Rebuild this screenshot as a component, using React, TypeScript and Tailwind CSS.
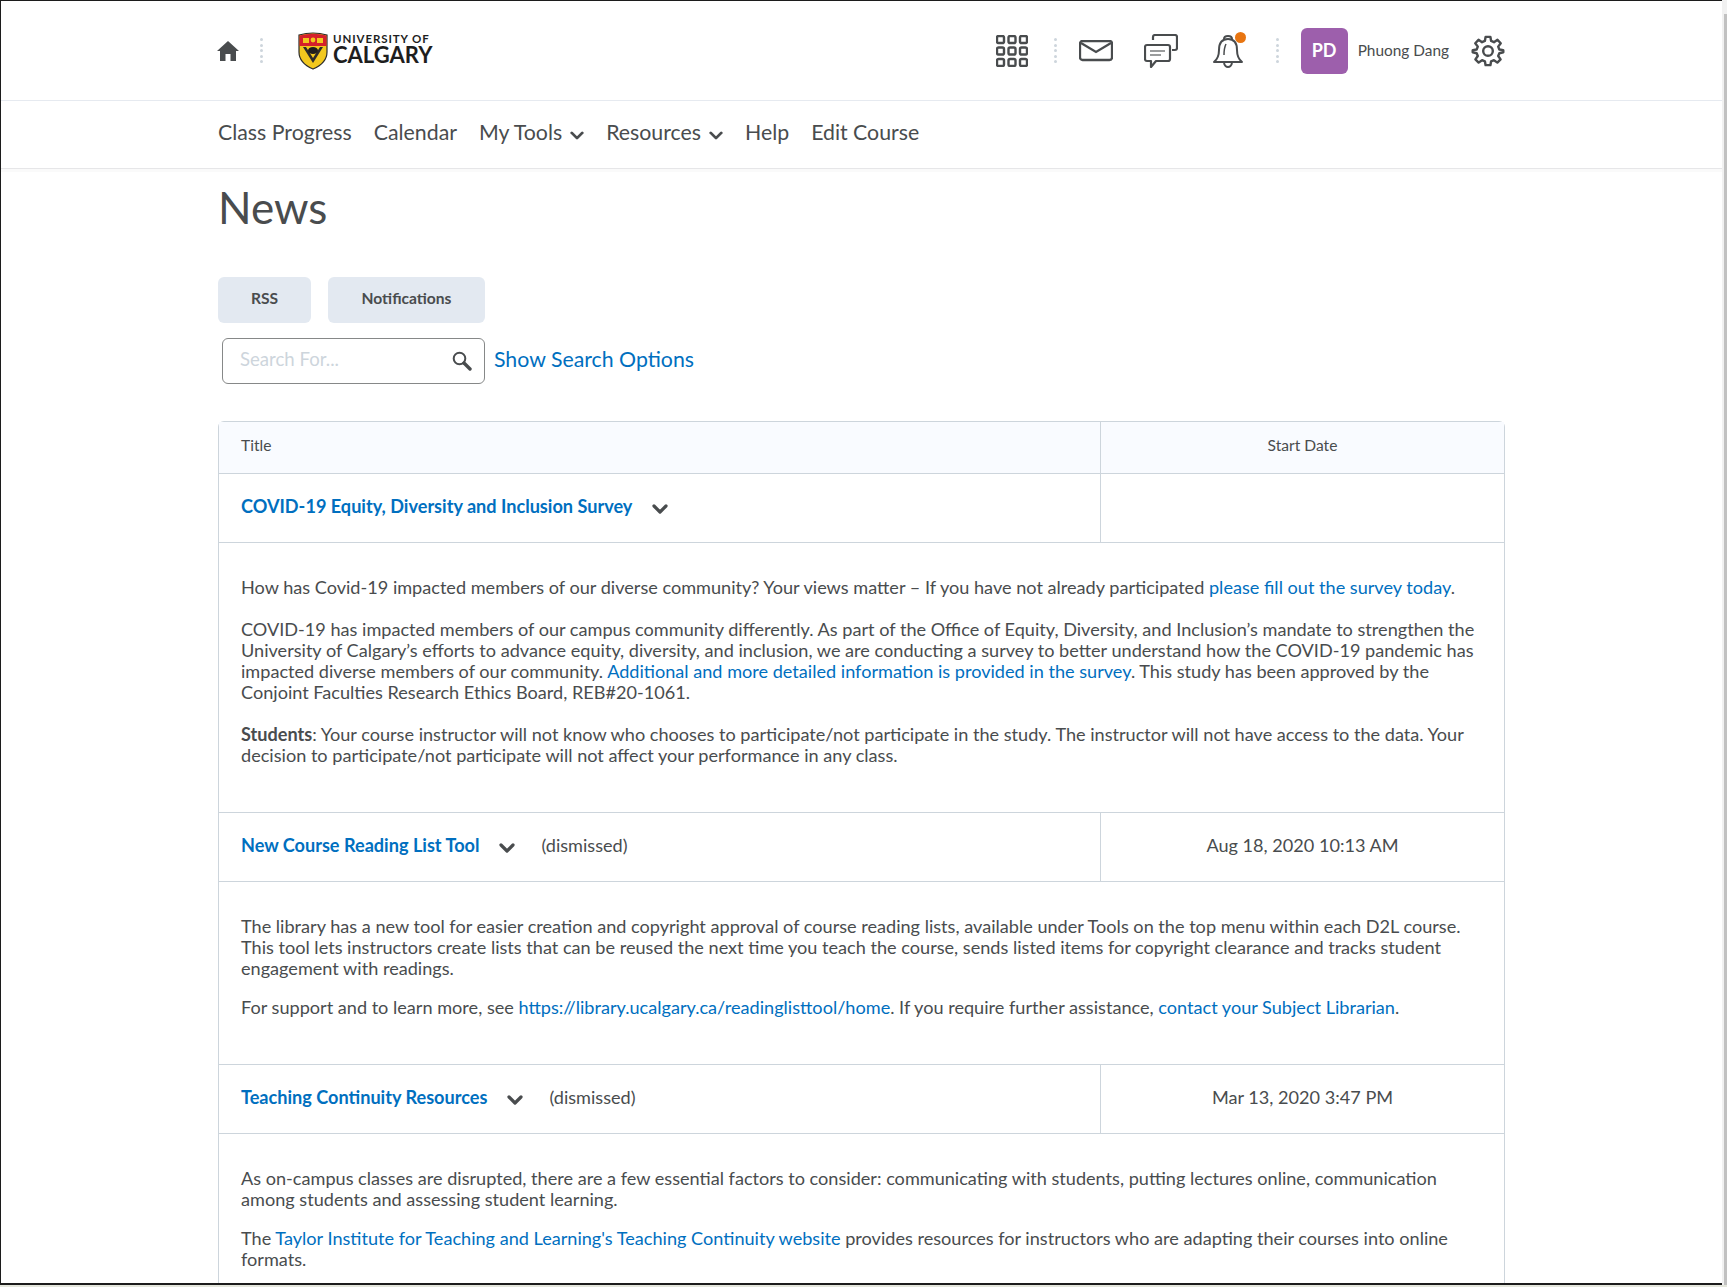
import { ReactNode } from "react";

const LATO = "[font-family:Lato,'Liberation_Sans',sans-serif]";

function Dots() {
  return (
    <div className="flex flex-col gap-[2.5px]">
      {[0, 1, 2, 3, 4].map((i) => (
        <span key={i} className="block h-[3px] w-[3px] rounded-full bg-[#cdd5dc]" />
      ))}
    </div>
  );
}

function Chevron({ className }: { className?: string }) {
  return (
    <svg width="16" height="10" viewBox="0 0 16 10" className={className}>
      <path d="M2 2 L8 8 L14 2" fill="none" stroke="#494c4e" strokeWidth="3.2" strokeLinecap="round" strokeLinejoin="round" />
    </svg>
  );
}

function Shield() {
  return (
    <svg width="30" height="38" viewBox="0 0 30 38">
      <path d="M1 3 Q15 -1 29 3 V20 Q29 31 15 37 Q1 31 1 20 Z" fill="#f2c81e" stroke="#2b2b2b" strokeWidth="1.2" />
      <path d="M1.5 3.5 Q15 0 28.5 3.5 V14 H1.5 Z" fill="#d5202a" />
      <rect x="5" y="6" width="6" height="5" fill="#f2c81e" />
      <rect x="19" y="6" width="6" height="5" fill="#f2c81e" />
      <circle cx="15" cy="8" r="2.4" fill="#f2c81e" />
      <path d="M5 15 L15 31 L25 15 L22 15 L15 26 L8 15 Z" fill="#2b2b2b" />
      <ellipse cx="15" cy="18.5" rx="5" ry="3.6" fill="#1e1e1e" />
    </svg>
  );
}

function A({ children }: { children: ReactNode }) {
  return <a className="text-[#006fbf]">{children}</a>;
}

function NewsHead({ title, dismissed, date }: { title: string; dismissed?: boolean; date?: string }) {
  return (
    <div className="flex h-[69px] shrink-0 border-b border-[#cdd5dc]">
      <div className="flex w-[882px] items-center border-r border-[#cdd5dc] pb-[3px] pl-[22px]">
        <span className="font-bold text-[#006fbf]">{title}</span>
        <Chevron className="ml-[20px] mt-[5px]" />
        {dismissed && <span className="ml-[26px]">(dismissed)</span>}
      </div>
      <div className="flex flex-1 items-center justify-center pb-[3px]">{date}</div>
    </div>
  );
}

const navItems = [
  { label: "Class Progress" },
  { label: "Calendar" },
  { label: "My Tools", menu: true },
  { label: "Resources", menu: true },
  { label: "Help" },
  { label: "Edit Course" },
];

export default function App() {
  return (
    <div className={`flex h-[1287px] flex-col overflow-hidden bg-white text-[18.12px] leading-[21px] text-[#494c4e] ${LATO}`}>
      <div className="flex min-h-0 flex-1">
        <div className="flex min-w-0 flex-1 flex-col overflow-hidden border-t-[1px] border-l-[1px] border-b-[2px] border-[#1c1c1c]">
          {/* top bar */}
          <div className="flex h-[100px] shrink-0 items-center border-b border-[#e6eaf0] pl-[216px] pr-[217px]">
            <svg width="22" height="20" viewBox="0 0 22 20" className="mt-[1px]">
              <path d="M11 0 L22 10 H19 V20 H13.5 V13 H8.5 V20 H3 V10 H0 Z" fill="#494c4e" />
            </svg>
            <div className="ml-[21px]"><Dots /></div>
            <div className="ml-[35px] flex items-center gap-[5px]">
              <Shield />
              <div className="flex flex-col pb-[3px] text-[#1e1e1e]">
                <span className="text-[11.5px] font-bold leading-[12px] tracking-[0.9px]">UNIVERSITY OF</span>
                <span className="text-[22px] font-bold leading-[20px]">CALGARY</span>
              </div>
            </div>
            <div className="ml-auto flex items-center">
              <svg width="32" height="32" viewBox="0 0 32 32" fill="none" stroke="#494c4e" strokeWidth="2.4">
                {[0, 11.5, 23].map((y) =>
                  [0, 11.5, 23].map((x) => <rect key={`${x}-${y}`} x={x + 1} y={y + 1} width="7" height="7" rx="1.6" />)
                )}
              </svg>
              <div className="ml-[26px]"><Dots /></div>
              <svg width="34" height="22" viewBox="0 0 34 22" className="ml-[22px]" fill="none" stroke="#494c4e" strokeWidth="2.3">
                <rect x="1" y="1" width="32" height="19" rx="2.5" />
                <path d="M2 3 L17 12 L32 3" />
              </svg>
              <svg width="34" height="34" viewBox="0 0 34 34" className="ml-[31px]" fill="none" stroke="#494c4e" strokeWidth="2.2" strokeLinejoin="round">
                <path d="M9 6 V3 Q9 1 11 1 H31 Q33 1 33 3 V14 Q33 16 31 16 H28" />
                <path d="M3 11 H24 Q26 11 26 13 V25 Q26 27 24 27 H12 L7 33 V27 H3 Q1 27 1 25 V13 Q1 11 3 11 Z" fill="white" />
                <path d="M6 17 H21 M6 21 H17" strokeWidth="1.5" stroke="#7a7c7e" />
              </svg>
              <div className="relative ml-[35px] h-[36px] w-[30px]">
                <svg width="30" height="36" viewBox="0 0 30 36" fill="none" stroke="#494c4e" strokeWidth="2" strokeLinejoin="round">
                  <path d="M11 6 Q11 3 15 3 Q19 3 19 6" />
                  <path d="M1 29 Q6 25 6 17 Q6 6 15 6 Q24 6 24 17 Q24 25 29 29 Z" />
                  <path d="M11 30 Q12 34 15 34 Q18 34 19 30" />
                  <path d="M11 22 Q11 15 13 11" strokeWidth="1.5" />
                </svg>
                <span className="absolute -right-[3px] -top-[1px] h-[11px] w-[11px] rounded-full bg-[#e87511]" />
              </div>
              <div className="ml-[33px]"><Dots /></div>
              <div className="ml-[22px] flex h-[46px] w-[47px] items-center justify-center rounded-[6px] bg-[#9d5fac] pb-[1px] text-[18px] font-bold text-white">PD</div>
              <span className="ml-[10px] pb-[1px] text-[15.4px]">Phuong Dang</span>
              <svg width="34" height="34" viewBox="0 0 24 24" className="ml-[22px]" fill="none" stroke="#494c4e" strokeWidth="1.7" strokeLinejoin="round">
                <circle cx="12" cy="12" r="3.4" />
                <path d="M10.3 2 H13.7 L14.2 4.9 L16.2 5.8 L18.7 4.1 L21 6.5 L19.2 8.9 L20 10.9 L22.8 11.4 V12.9 L20 13.6 L19.2 15.5 L20.9 17.9 L18.6 20.2 L16.2 18.5 L14.2 19.3 L13.7 22 H10.3 L9.8 19.3 L7.8 18.5 L5.4 20.2 L3.1 17.9 L4.8 15.5 L4 13.6 L1.2 12.9 V11.4 L4 10.9 L4.8 8.9 L3 6.5 L5.3 4.1 L7.8 5.8 L9.8 4.9 Z" />
              </svg>
            </div>
          </div>

          {/* nav */}
          <div className="flex h-[68px] shrink-0 items-center gap-[22px] border-b border-[#e6e6e8] pb-[5px] pl-[217px] text-[21.3px] shadow-[0_3px_0_#fafafa]">
            {navItems.map((n) => (
              <span key={n.label} className="flex items-center gap-[8px]">
                {n.label}
                {n.menu && <Chevron className="mt-[6px] h-[9px] w-[14px]" />}
              </span>
            ))}
          </div>

          {/* page */}
          <div className="flex min-h-0 flex-1 flex-col px-[217px]">
            <h1 className="mt-[13px] text-[44px] font-normal leading-[50px]">News</h1>
            <div className="mt-[45px] flex gap-[17px] text-[15.6px] font-bold">
              <button className="h-[46px] w-[93px] rounded-[6px] bg-[#e3e9f1] pb-[3px]">RSS</button>
              <button className="h-[46px] w-[157px] rounded-[6px] bg-[#e3e9f1] pb-[3px]">Notifications</button>
            </div>
            <div className="mt-[15px] flex items-center">
              <div className="ml-[4px] flex h-[46px] w-[263px] items-center justify-between rounded-[6px] border border-[#868888] pl-[17px] pr-[12px] text-[18.6px] text-[#cdd5dc]">
                <span className="pb-[3px]">Search For...</span>
                <svg width="20" height="20" viewBox="0 0 20 20" fill="none" stroke="#494c4e">
                  <circle cx="7.5" cy="7.5" r="5.8" strokeWidth="2" />
                  <path d="M12 12 L18 18" strokeWidth="3.4" strokeLinecap="round" />
                </svg>
              </div>
              <a className="ml-[9px] pb-[3px] text-[21.3px] text-[#006fbf]">Show Search Options</a>
            </div>

            {/* table */}
            <div className="mt-[37px] flex min-h-0 flex-1 flex-col rounded-t-[6px] border-x border-t border-[#cdd5dc]">
              <div className="flex h-[52px] shrink-0 border-b border-[#cdd5dc] bg-[#f9fbff] text-[15.6px]">
                <div className="flex w-[882px] items-center border-r border-[#cdd5dc] pb-[4px] pl-[22px]">Title</div>
                <div className="flex flex-1 items-center justify-center pb-[4px]">Start Date</div>
              </div>
              <NewsHead title="COVID-19 Equity, Diversity and Inclusion Survey" />
              <div className="h-[270px] shrink-0 border-b border-[#cdd5dc] px-[22px] pt-[34px]">
                <p>How has Covid-19 impacted members of our diverse community? Your views matter – If you have not already participated <A>please fill out the survey today</A>.</p>
                <p className="mt-[21px]">COVID-19 has impacted members of our campus community differently. As part of the Office of Equity, Diversity, and Inclusion’s mandate to strengthen the University of Calgary’s efforts to advance equity, diversity, and inclusion, we are conducting a survey to better understand how the COVID-19 pandemic has impacted diverse members of our community. <A>Additional and more detailed information is provided in the survey</A>. This study has been approved by the Conjoint Faculties Research Ethics Board, REB#20-1061.</p>
                <p className="mt-[21px]"><b>Students</b>: Your course instructor will not know who chooses to participate/not participate in the study. The instructor will not have access to the data. Your decision to participate/not participate will not affect your performance in any class.</p>
              </div>
              <NewsHead title="New Course Reading List Tool" dismissed date="Aug 18, 2020 10:13 AM" />
              <div className="h-[183px] shrink-0 border-b border-[#cdd5dc] px-[22px] pt-[34px]">
                <p>The library has a new tool for easier creation and copyright approval of course reading lists, available under Tools on the top menu within each D2L course. This tool lets instructors create lists that can be reused the next time you teach the course, sends listed items for copyright clearance and tracks student engagement with readings.</p>
                <p className="mt-[18px]">For support and to learn more, see <A>https://library.ucalgary.ca/readinglisttool/home</A>. If you require further assistance, <A>contact your Subject Librarian</A>.</p>
              </div>
              <NewsHead title="Teaching Continuity Resources" dismissed date="Mar 13, 2020 3:47 PM" />
              <div className="px-[22px] pt-[34px]">
                <p>As on-campus classes are disrupted, there are a few essential factors to consider: communicating with students, putting lectures online, communication among students and assessing student learning.</p>
                <p className="mt-[18px]">The <A>Taylor Institute for Teaching and Learning's Teaching Continuity website</A> provides resources for instructors who are adapting their courses into online formats.</p>
              </div>
            </div>
          </div>
        </div>
        {/* scrollbar */}
        <div className="flex w-[5px] shrink-0 flex-col bg-[#f1f1f1] pl-[2px] pt-[14px]">
          <div className="h-full bg-[#c1c1c1]" />
        </div>
      </div>
      <div className="h-[2px] shrink-0 bg-[#e4e6dc]" />
    </div>
  );
}
